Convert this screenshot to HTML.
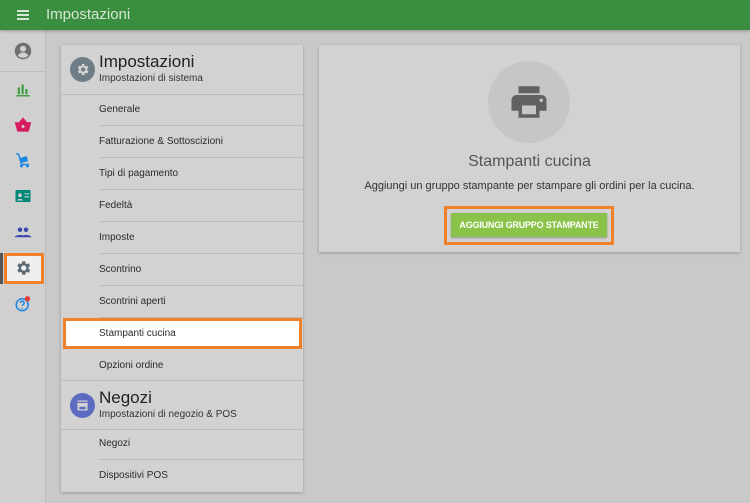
<!DOCTYPE html>
<html><head><meta charset="utf-8"><style>
*{box-sizing:border-box;margin:0;padding:0}
body{width:750px;height:503px;overflow:hidden;background:#c9c9c9;font-family:"Liberation Sans",sans-serif;position:relative}
.top{position:absolute;left:0;top:0;width:750px;height:30px;background:#3a8e3f;box-shadow:0 1px 3px rgba(0,0,0,.3);z-index:2}
.top span{position:absolute;left:46px;top:6px;color:#d7e6d5;font-size:15px}
.ham{position:absolute;left:17px;top:10px;width:12px;height:2px;background:#d7e6d5;box-shadow:0 4px 0 #d7e6d5,0 8px 0 #d7e6d5}
.side{position:absolute;left:0;top:30px;width:46px;height:473px;background:#d0d0d0;border-right:1px solid #bdbdbd}
.ic{position:absolute;left:14px;width:18px;height:18px}
.card{position:absolute;background:#d2d2d2;box-shadow:0 1px 3px rgba(0,0,0,.25)}
.hd{position:absolute;left:0;width:242px;height:50px;border-bottom:1px solid #bcbcbc}
.hd .c{position:absolute;left:9px;top:12px;width:25px;height:25px;border-radius:50%}
.hd b{position:absolute;left:38px;top:7px;font-weight:normal;font-size:17px;color:#222}
.hd i{position:absolute;left:38px;top:28px;font-style:normal;font-size:10px;color:#333}
.it{position:absolute;left:38px;width:204px;height:32px;border-bottom:1px solid #bcbcbc;font-size:10px;color:#2a2a2a;line-height:32px}
</style></head><body>
<div class="top"><div class="ham"></div><span>Impostazioni</span></div>
<div class="side">
<svg class="ic" style="top:12px" viewBox="0 0 24 24"><circle cx="12" cy="12" r="11" fill="#707070"/><circle cx="12" cy="9" r="4" fill="#d0d0d0"/><path d="M5 18c2-3 4-4 7-4s5 1 7 4c-2 2-4 3-7 3s-5-1-7-3z" fill="#d0d0d0"/></svg>
<div style="position:absolute;left:0;top:41px;width:46px;border-top:1px solid #bdbdbd"></div>
<svg class="ic" style="top:50px" viewBox="0 0 24 24"><path d="M3 20h18v2H3zM5 10h3v9H5zM10 6h3v13h-3zM15 12h3v7h-3z" fill="#43a047"/></svg>
<svg class="ic" style="top:86px" viewBox="0 0 24 24"><path d="M2 9h20l-3 11H5z M7 9l5-6 5 6" fill="#d81b60" stroke="#d81b60" stroke-width="1.5"/><circle cx="12" cy="14" r="2" fill="#d0d0d0"/></svg>
<svg class="ic" style="top:121px" viewBox="0 0 24 24"><path d="M3 4l3 0 4 14h10" stroke="#1e88e5" stroke-width="2" fill="none"/><rect x="9" y="8" width="9" height="7" fill="#1e88e5" transform="rotate(-15 13 11)"/><circle cx="10" cy="20" r="2" fill="#1e88e5"/><circle cx="18" cy="20" r="2" fill="#1e88e5"/></svg>
<svg class="ic" style="top:157px" viewBox="0 0 24 24"><rect x="2" y="4" width="20" height="16" rx="1" fill="#00897b"/><circle cx="8" cy="11" r="2.5" fill="#d0d0d0"/><path d="M4 18c1-3 7-3 8 0z" fill="#d0d0d0"/><path d="M14 9h6M14 13h6" stroke="#d0d0d0" stroke-width="1.5"/></svg>
<svg class="ic" style="top:193px" viewBox="0 0 24 24"><circle cx="8" cy="9" r="3" fill="#3949ab"/><circle cx="16" cy="9" r="3" fill="#3949ab"/><path d="M1 19c0-4 14-4 14 0zM9 19c0-4 14-4 14 0z" fill="#3949ab"/></svg>
<div style="position:absolute;left:0;top:223px;width:3px;height:31px;background:#555"></div>
<div style="position:absolute;left:4px;top:223px;width:40px;height:31px;background:#efefef;border:3px solid #f0802a"></div>
<svg class="ic" style="top:229px" viewBox="0 0 24 24"><path fill="#5a6a72" d="M19.4 13a7.5 7.5 0 000-2l2.1-1.6-2-3.5-2.5 1a7 7 0 00-1.7-1L15 3h-4l-.4 2.7a7 7 0 00-1.7 1l-2.5-1-2 3.5L6.5 11a7.5 7.5 0 000 2l-2.1 1.6 2 3.5 2.5-1a7 7 0 001.7 1L11 21h4l.4-2.7a7 7 0 001.7-1l2.5 1 2-3.5zM13 15.5a3.5 3.5 0 110-7 3.5 3.5 0 010 7z"/></svg>
<svg class="ic" style="top:265px" viewBox="0 0 24 24"><circle cx="11" cy="13" r="8" fill="none" stroke="#1e88e5" stroke-width="2"/><path d="M8.5 10.5a2.5 2.5 0 115 .5c0 1.5-2.5 2-2.5 3.5" fill="none" stroke="#1e88e5" stroke-width="2"/><circle cx="11" cy="18" r="1" fill="#1e88e5"/><circle cx="18" cy="5" r="3.5" fill="#e53935"/></svg>
</div>
<div class="card" style="left:61px;top:45px;width:242px;height:447px">
<div class="hd" style="top:0"><div class="c" style="background:#6f7e86"><svg viewBox="0 0 24 24" width="15" height="15" style="margin:5px"><path fill="#d2d2d2" d="M19.4 13a7.5 7.5 0 000-2l2.1-1.6-2-3.5-2.5 1a7 7 0 00-1.7-1L15 3h-4l-.4 2.7a7 7 0 00-1.7 1l-2.5-1-2 3.5L6.5 11a7.5 7.5 0 000 2l-2.1 1.6 2 3.5 2.5-1a7 7 0 001.7 1L11 21h4l.4-2.7a7 7 0 001.7-1l2.5 1 2-3.5zM13 15.5a3.5 3.5 0 110-7 3.5 3.5 0 010 7z"/></svg></div><b>Impostazioni</b><i>Impostazioni di sistema</i></div>
<div class="it" style="top:49px">Generale</div>
<div class="it" style="top:81px">Fatturazione &amp; Sottoscizioni</div>
<div class="it" style="top:113px">Tipi di pagamento</div>
<div class="it" style="top:145px">Fedeltà</div>
<div class="it" style="top:177px">Imposte</div>
<div class="it" style="top:209px">Scontrino</div>
<div class="it" style="top:241px">Scontrini aperti</div>
<div style="position:absolute;left:2px;top:273px;width:239px;height:31px;background:#fff;border:3px solid #f0802a"></div>
<div class="it" style="top:273px;border:none">Stampanti cucina</div>
<div class="it" style="top:305px;border:none">Opzioni ordine</div>
<div class="hd" style="top:335px;border-top:1px solid #bcbcbc"><div class="c" style="background:#5c6bc0"><svg viewBox="0 0 24 24" width="15" height="15" style="margin:5px"><path fill="#d2d2d2" d="M4 4h16v2H4zM3 8h18l-1 4v8H4v-8zM7 14v4h10v-4z"/></svg></div><b>Negozi</b><i>Impostazioni di negozio &amp; POS</i></div>
<div class="it" style="top:383px">Negozi</div>
<div class="it" style="top:415px;border:none">Dispositivi POS</div>
</div>
<div class="card" style="left:319px;top:45px;width:421px;height:207px">
<div style="position:absolute;left:169px;top:16px;width:82px;height:82px;border-radius:50%;background:#c6c6c6"></div>
<svg style="position:absolute;left:189px;top:36px" width="42" height="42" viewBox="0 0 24 24"><path fill="#616161" d="M19 8H5c-1.7 0-3 1.3-3 3v6h4v4h12v-4h4v-6c0-1.7-1.3-3-3-3zm-3 11H8v-5h8zm3-7a1 1 0 110-2 1 1 0 010 2zM18 3H6v4h12z"/></svg>
<div style="position:absolute;left:0;width:421px;top:108px;text-align:center;font-size:16px;color:#555">Stampanti cucina</div>
<div style="position:absolute;left:0;width:421px;top:135px;text-align:center;font-size:11px;color:#333">Aggiungi un gruppo stampante per stampare gli ordini per la cucina.</div>
<div style="position:absolute;left:125px;top:161px;width:170px;height:39px;border:3px solid #f0802a"></div>
<div style="position:absolute;left:132px;top:168px;width:156px;height:24px;background:#8bc34a;box-shadow:0 1px 2px rgba(0,0,0,.3);color:#fff;font-size:9px;font-weight:bold;text-align:center;line-height:24px;white-space:nowrap;letter-spacing:-0.2px">AGGIUNGI GRUPPO STAMPANTE</div>
</div>
</body></html>
